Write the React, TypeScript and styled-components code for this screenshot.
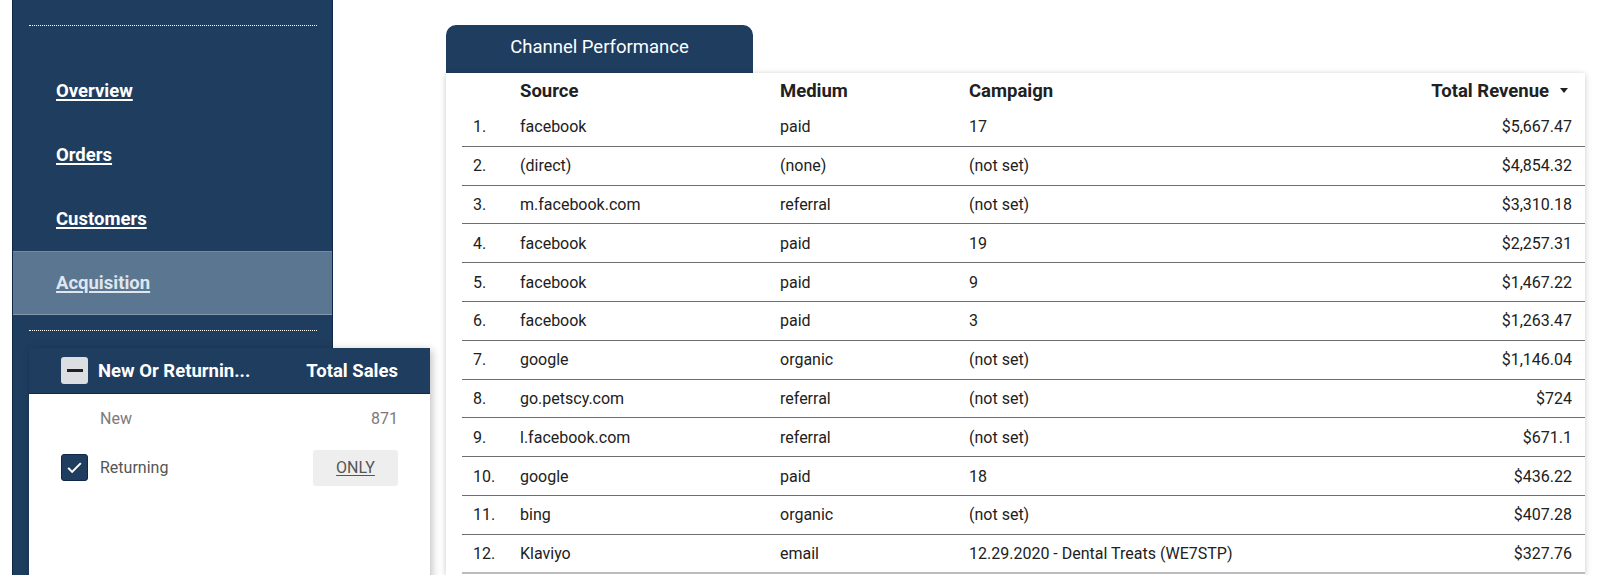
import React from "react";
import styled, { createGlobalStyle } from "styled-components";

const NAVY = "#1f3d5f";

const GlobalStyle = createGlobalStyle`
  html, body {
    margin: 0;
    padding: 0;
    background: #ffffff;
    font-family: Roboto, "Liberation Sans", Arial, sans-serif;
    overflow: hidden;
  }
`;

const Page = styled.div`
  display: flex;
  height: 575px;
  overflow: hidden;
`;

const Sidebar = styled.aside`
  flex-shrink: 0;
  width: 319px;
  margin-left: 12px;
  height: 575px;
  background: ${NAVY};
  border-left: 1px solid #0f2748;
  border-right: 1px solid #0f2748;
  display: flex;
  flex-direction: column;
  padding-top: 25px;
  box-sizing: content-box;
`;

const Dots = styled.div<{ $gap: number }>`
  margin: 0 15px 0 16px;
  border-top: 1px dotted #ffffff;
  margin-bottom: ${({ $gap }) => $gap}px;
`;

const Nav = styled.nav`
  display: flex;
  flex-direction: column;
  margin-bottom: 15px;
`;

const NavItem = styled.a<{ $active?: boolean }>`
  display: flex;
  align-items: center;
  height: 64px;
  box-sizing: border-box;
  padding-left: 43px;
  font-size: 18.5px;
  font-weight: 700;
  color: ${({ $active }) => ($active ? "#dfe6ee" : "#ffffff")};
  text-decoration: underline;
  text-underline-offset: 2px;
  text-decoration-thickness: 1.5px;
  background: ${({ $active }) => ($active ? "#5b7691" : "transparent")};
  border-top: 1px solid
    ${({ $active }) => ($active ? "rgba(255,255,255,0.15)" : "transparent")};
  border-bottom: 1px solid
    ${({ $active }) => ($active ? "rgba(255,255,255,0.25)" : "transparent")};
`;

const FilterPanel = styled.section`
  margin-left: 16px;
  width: 401px;
  flex: 1;
  background: #ffffff;
  box-shadow: 2px 2px 8px rgba(0, 0, 0, 0.25);
  position: relative;
  z-index: 2;
`;

const FilterHeader = styled.div`
  display: flex;
  align-items: center;
  height: 45px;
  background: ${NAVY};
  border-bottom: 1px solid #0f2748;
  padding: 0 32px;
  color: #ffffff;
  font-size: 18.5px;
  font-weight: 700;
`;

const MinusBox = styled.span`
  width: 27px;
  height: 27px;
  border-radius: 3px;
  background: #dcdee1;
  display: flex;
  align-items: center;
  justify-content: center;
  margin-right: 10px;
  &::after {
    content: "";
    width: 16px;
    height: 2.5px;
    background: #202124;
  }
`;

const HeaderLabel = styled.span`
  flex: 1;
`;

const FilterRow = styled.div`
  display: flex;
  align-items: center;
  height: 49px;
  padding: 0 32px;
  font-size: 16px;
`;

const CheckSlot = styled.span<{ $checked?: boolean }>`
  width: 27px;
  height: 27px;
  border-radius: 3px;
  box-sizing: border-box;
  margin-right: 12px;
  display: flex;
  align-items: center;
  justify-content: center;
  background: ${({ $checked }) => ($checked ? NAVY : "transparent")};
  border: 1px solid ${({ $checked }) => ($checked ? "#0f2748" : "transparent")};
`;

const RowLabel = styled.span<{ $muted?: boolean }>`
  flex: 1;
  color: ${({ $muted }) => ($muted ? "#7a7a7a" : "#555555")};
`;

const RowValue = styled.span`
  color: #7a7a7a;
`;

const OnlyButton = styled.button`
  width: 85px;
  height: 36px;
  border: none;
  border-radius: 3px;
  background: #eeeeee;
  color: #555555;
  font-family: inherit;
  font-size: 16px;
  text-decoration: underline;
  text-underline-offset: 2px;
  padding: 0;
`;

const Content = styled.main`
  flex: 1;
  display: flex;
  flex-direction: column;
  padding: 25px 15px 0 113px;
`;

const Tab = styled.div`
  width: 307px;
  height: 48px;
  background: ${NAVY};
  border-radius: 10px 10px 0 0;
  color: #ffffff;
  font-size: 18.5px;
  display: flex;
  justify-content: center;
  padding-top: 11px;
  box-sizing: border-box;
`;

const Card = styled.div`
  flex: 1;
  background: #ffffff;
  box-shadow: 0 1px 6px rgba(0, 0, 0, 0.22);
`;

const Row = styled.div<{ $head?: boolean; $last?: boolean }>`
  display: grid;
  grid-template-columns: 47px 260px 189px 1fr auto;
  align-items: center;
  margin-left: 16px;
  padding: 0 13px 0 11px;
  box-sizing: border-box;
  height: ${({ $head }) => ($head ? "35px" : "38.8px")};
  font-size: ${({ $head }) => ($head ? "18.5px" : "16px")};
  font-weight: ${({ $head }) => ($head ? 700 : 400)};
  color: #212121;
  border-bottom: ${({ $head, $last }) =>
    $head ? "none" : $last ? "2px solid #bcbcbc" : "1px solid #6f6f6f"};
`;

const Num = styled.span`
  display: flex;
  align-items: center;
  justify-content: flex-end;
  gap: 11px;
`;

const SortArrow = styled.span`
  width: 0;
  height: 0;
  border-left: 4.5px solid transparent;
  border-right: 4.5px solid transparent;
  border-top: 5px solid #212121;
  margin-right: 4px;
`;

const rows: [string, string, string, string][] = [
  ["facebook", "paid", "17", "$5,667.47"],
  ["(direct)", "(none)", "(not set)", "$4,854.32"],
  ["m.facebook.com", "referral", "(not set)", "$3,310.18"],
  ["facebook", "paid", "19", "$2,257.31"],
  ["facebook", "paid", "9", "$1,467.22"],
  ["facebook", "paid", "3", "$1,263.47"],
  ["google", "organic", "(not set)", "$1,146.04"],
  ["go.petscy.com", "referral", "(not set)", "$724"],
  ["l.facebook.com", "referral", "(not set)", "$671.1"],
  ["google", "paid", "18", "$436.22"],
  ["bing", "organic", "(not set)", "$407.28"],
  ["Klaviyo", "email", "12.29.2020 - Dental Treats (WE7STP)", "$327.76"],
];

const navItems = ["Overview", "Orders", "Customers", "Acquisition"];

export default function App() {
  return (
    <Page>
      <GlobalStyle />
      <Sidebar>
        <Dots $gap={33} />
        <Nav>
          {navItems.map((n) => (
            <NavItem key={n} $active={n === "Acquisition"}>
              {n}
            </NavItem>
          ))}
        </Nav>
        <Dots $gap={17} />
        <FilterPanel>
          <FilterHeader>
            <MinusBox />
            <HeaderLabel>New Or Returnin...</HeaderLabel>
            <span>Total Sales</span>
          </FilterHeader>
          <FilterRow>
            <CheckSlot />
            <RowLabel $muted>New</RowLabel>
            <RowValue>871</RowValue>
          </FilterRow>
          <FilterRow>
            <CheckSlot $checked>
              <svg width="19" height="19" viewBox="0 0 24 24">
                <path
                  d="M4 12.5l5 5L20 6.5"
                  fill="none"
                  stroke="#ffffff"
                  strokeWidth="2.6"
                />
              </svg>
            </CheckSlot>
            <RowLabel>Returning</RowLabel>
            <OnlyButton>ONLY</OnlyButton>
          </FilterRow>
        </FilterPanel>
      </Sidebar>
      <Content>
        <Tab>Channel Performance</Tab>
        <Card>
          <Row $head>
            <span />
            <span>Source</span>
            <span>Medium</span>
            <span>Campaign</span>
            <Num>
              Total Revenue <SortArrow />
            </Num>
          </Row>
          {rows.map((r, i) => (
            <Row key={i} $last={i === rows.length - 1}>
              <span>{i + 1}.</span>
              <span>{r[0]}</span>
              <span>{r[1]}</span>
              <span>{r[2]}</span>
              <Num>{r[3]}</Num>
            </Row>
          ))}
        </Card>
      </Content>
    </Page>
  );
}
